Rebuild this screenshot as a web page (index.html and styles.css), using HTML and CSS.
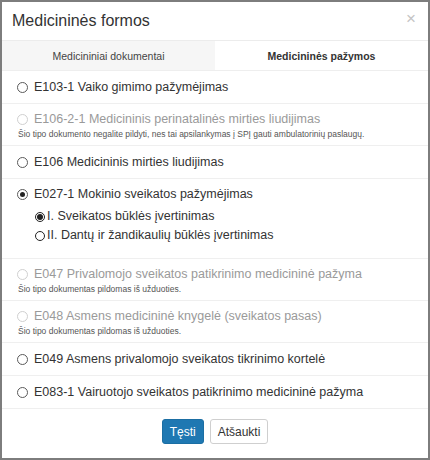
FILE: index.html
```html
<!DOCTYPE html>
<html lang="lt">
<head>
<meta charset="utf-8">
<link rel="stylesheet" href="styles.css">
</head>
<body>
<div class="dialog">
  <div class="header">
    <h1 class="title">Medicininės formos</h1>
    <span class="close">×</span>
  </div>
  <div class="tabs">
    <div class="tab">Medicininiai dokumentai</div>
    <div class="tab active">Medicininės pažymos</div>
  </div>
  <div class="list">
    <div class="item">
      <div class="line"><span class="radio"></span>E103-1 Vaiko gimimo pažymėjimas</div>
    </div>
    <div class="item disabled">
      <div class="line"><span class="radio"></span>E106-2-1 Medicininis perinatalinės mirties liudijimas</div>
      <div class="note">Šio tipo dokumento negalite pildyti, nes tai apsilankymas į SPĮ gauti ambulatorinių paslaugų.</div>
    </div>
    <div class="item">
      <div class="line"><span class="radio"></span>E106 Medicininis mirties liudijimas</div>
    </div>
    <div class="item group">
      <div class="line"><span class="radio checked"></span>E027-1 Mokinio sveikatos pažymėjimas</div>
      <div class="sublist">
        <div class="subline"><span class="radio sub checked"></span>I. Sveikatos būklės įvertinimas</div>
        <div class="subline"><span class="radio sub"></span>II. Dantų ir žandikaulių būklės įvertinimas</div>
      </div>
    </div>
    <div class="item disabled">
      <div class="line"><span class="radio"></span>E047 Privalomojo sveikatos patikrinimo medicininė pažyma</div>
      <div class="note">Šio tipo dokumentas pildomas iš užduoties.</div>
    </div>
    <div class="item disabled">
      <div class="line"><span class="radio"></span>E048 Asmens medicininė knygelė (sveikatos pasas)</div>
      <div class="note">Šio tipo dokumentas pildomas iš užduoties.</div>
    </div>
    <div class="item">
      <div class="line"><span class="radio"></span>E049 Asmens privalomojo sveikatos tikrinimo kortelė</div>
    </div>
    <div class="item">
      <div class="line"><span class="radio"></span>E083-1 Vairuotojo sveikatos patikrinimo medicininė pažyma</div>
    </div>
  </div>
  <div class="footer">
    <button class="btn primary">Tęsti</button>
    <button class="btn">Atšaukti</button>
  </div>
</div>
</body>
</html>
```

FILE: styles.css
```css
* { box-sizing: border-box; }
html, body { margin: 0; padding: 0; background: #fff; }
body {
  font-family: "Liberation Sans", Arial, sans-serif;
  color: #333;
}
.dialog {
  width: 430px;
  height: 460px;
  border: 2px solid #7d7d7d;
  background: #fff;
  display: flex;
  flex-direction: column;
  overflow: hidden;
}
.header {
  flex: none;
  height: 39px;
  display: flex;
  align-items: center;
  justify-content: space-between;
  padding: 0 12px 0 10px;
  border-bottom: 1px solid #ececec;
}
.title {
  margin: 0;
  font-weight: normal;
  font-size: 16px;
  color: #333;
}
.close {
  font-size: 17px;
  color: #c4c4c4;
  line-height: 1;
  margin-top: -6px;
}
.tabs {
  flex: none;
  display: flex;
  height: 30px;
  border-bottom: 1px solid #eeeeee;
}
.tab {
  flex: 1;
  display: flex;
  align-items: center;
  justify-content: center;
  font-size: 10.5px;
  color: #444;
  background: #f6f6f6;
}
.tab.active {
  background: #fff;
  font-weight: bold;
  color: #333;
}
.list { flex: none; }
.item {
  padding: 8px 0 7px 15px;
  border-bottom: 1px solid #efefef;
}
.item.disabled { padding: 7px 0 4px 15px; }
.item.group { padding: 7px 0 14px 15px; }
.line {
  display: flex;
  align-items: center;
  font-size: 12.5px;
  line-height: 17px;
}
.radio {
  width: 11px;
  height: 11px;
  border: 1px solid #5a5a5a;
  border-radius: 50%;
  margin-right: 6px;
  flex: none;
  display: inline-flex;
  align-items: center;
  justify-content: center;
}
.radio.checked::after {
  content: "";
  width: 5px;
  height: 5px;
  border-radius: 50%;
  background: #222;
}
.disabled .line { color: #9a9a9a; }
.disabled .radio { border-color: #d0d0d0; }
.note {
  font-size: 8.5px;
  line-height: 13px;
  color: #555;
  margin-left: 1px;
}
.sublist {
  margin-top: 5px;
  padding-left: 18px;
  display: flex;
  flex-direction: column;
  gap: 2px;
}
.subline {
  display: flex;
  align-items: center;
  font-size: 12.5px;
  line-height: 17px;
}
.radio.sub {
  width: 10px;
  height: 10px;
  border: 1.2px solid #222;
  margin-right: 2px;
}
.radio.sub.checked::after { width: 6px; height: 6px; }
.footer {
  flex: 1;
  display: flex;
  justify-content: center;
  align-items: flex-start;
  gap: 6px;
  padding-top: 10px;
}
.btn {
  font-family: "Liberation Sans", Arial, sans-serif;
  font-size: 12px;
  height: 25px;
  padding: 0 7px;
  border: 1px solid #cfcfcf;
  border-radius: 3px;
  background: #fff;
  color: #333;
}
.btn.primary {
  background: #1f78b2;
  border-color: #1b6ea3;
  color: #fff;
}
```
